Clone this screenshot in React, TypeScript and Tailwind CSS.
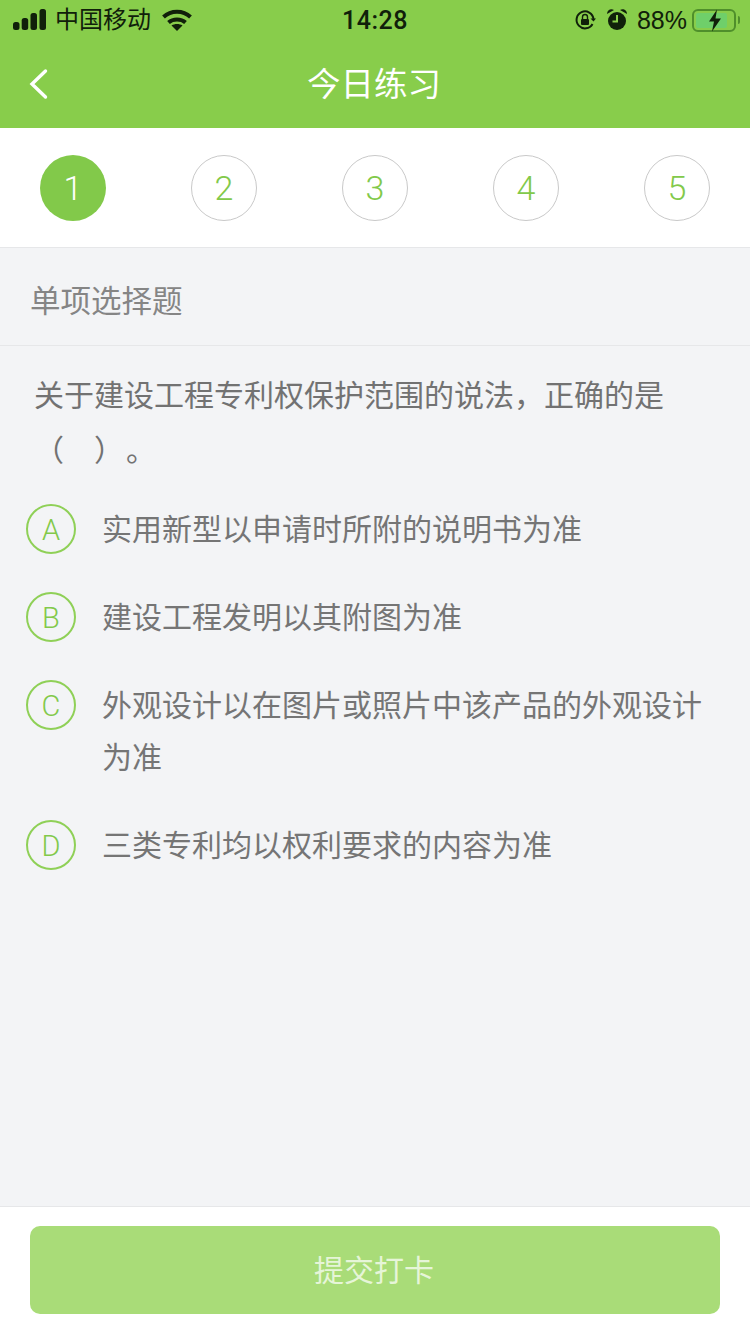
const cjk = "font-['Liberation_Sans','Noto_Sans_CJK_SC',sans-serif]";

const steps = [1, 2, 3, 4, 5];

const options = [
  { key: "A", text: "实用新型以申请时所附的说明书为准" },
  { key: "B", text: "建设工程发明以其附图为准" },
  { key: "C", text: "外观设计以在图片或照片中该产品的外观设计为准" },
  { key: "D", text: "三类专利均以权利要求的内容为准" },
];

function StatusBar() {
  return (
    <div className="flex h-10 items-center justify-between pl-[13px] pr-[10px] text-[#10200a]">
      <div className="flex items-center">
        <svg width="34" height="22" viewBox="0 0 34 22" fill="currentColor">
          <rect x="0" y="13" width="6.5" height="8" rx="2.5" />
          <rect x="8.7" y="9" width="6.5" height="12" rx="2.5" />
          <rect x="17.5" y="4" width="6.5" height="17" rx="2.5" />
          <rect x="26.5" y="0" width="6.5" height="21" rx="2.5" />
        </svg>
        <span className="ml-[8px] text-[24px] leading-none">中国移动</span>
        <svg className="ml-[11px]" width="30" height="22" viewBox="0 0 30 22" fill="none" stroke="currentColor" strokeWidth="4">
          <path d="M1.5 8 C9 1 21 1 28.5 8" />
          <path d="M6.5 13.5 C11 9.5 19 9.5 23.5 13.5" />
          <path d="M15 22 L9.5 16.5 C12.5 14.5 17.5 14.5 20.5 16.5 Z" fill="currentColor" stroke="none" />
        </svg>
      </div>
      <span className="absolute left-0 right-0 text-center font-['Roboto',sans-serif] text-[25px] font-medium leading-none tracking-[0.5px]">14:28</span>
      <div className="flex items-center">
        <svg width="22" height="22" viewBox="0 0 22 22" fill="none" stroke="currentColor" strokeWidth="2">
          <path d="M18.5 15 A8.5 8.5 0 1 1 19.5 10" />
          <path d="M16.5 9.5 L19.5 12.5 L22 9.5" fill="currentColor" stroke="none" />
          <rect x="7" y="10" width="8" height="6" rx="1" fill="currentColor" stroke="none" />
          <path d="M8.5 10 V8 A2.5 2.5 0 0 1 13.5 8 V10" strokeWidth="1.4" />
        </svg>
        <svg className="ml-[10px]" width="22" height="24" viewBox="0 0 22 24">
          <circle cx="11" cy="13" r="9" fill="currentColor" />
          <path d="M1 6 C1 2 5 0 8 2 Z" fill="currentColor" />
          <path d="M21 6 C21 2 17 0 14 2 Z" fill="currentColor" />
          <path d="M11 7 V13.5 H6.5" fill="none" stroke="#88cd4b" strokeWidth="2" />
        </svg>
        <span className="ml-[9px] text-[25px] leading-none">88%</span>
        <div className="relative ml-[5px] h-[23px] w-[44px] rounded-[6px] border-2 border-[#4f8f2b] p-[2px]">
          <div className="h-full w-[85%] rounded-[2px] bg-[#6fcf6a]" />
          <svg className="absolute left-[13px] top-[-2px]" width="16" height="23" viewBox="0 0 16 22" fill="currentColor">
            <path d="M10 0 L2 12 H7 L5 22 L14 9 H8.5 Z" />
          </svg>
        </div>
        <div className="ml-[2px] h-[8px] w-[2px] rounded-r bg-[#4f8f2b]" />
      </div>
    </div>
  );
}

export default function App() {
  return (
    <div className={`flex h-[1334px] w-[750px] flex-col bg-[#f3f4f6] ${cjk}`}>
      <header className="relative h-32 bg-[#88cd4b]">
        <StatusBar />
        <div className="relative flex h-[88px] items-center justify-center pt-[2px]">
          <svg className="absolute left-[29px] top-[28px]" width="20" height="32" viewBox="0 0 20 32" fill="none" stroke="#fff" strokeWidth="3.4" strokeLinecap="round">
            <path d="M16.5 3 L3 16 L16.5 29" />
          </svg>
          <span className="pr-[2px] text-[33.5px] leading-none text-white">今日练习</span>
        </div>
      </header>

      <div className="flex h-[120px] items-center justify-between border-b border-[#e6e7e9] bg-white px-10 pt-[1px] font-['Roboto',sans-serif] font-light">
        {steps.map((n) =>
          n === 1 ? (
            <div key={n} className="flex size-[66px] items-center justify-center rounded-full bg-[#82c94a] text-[34px] text-white">
              {n}
            </div>
          ) : (
            <div key={n} className="flex size-[66px] items-center justify-center rounded-full border border-[#c9c9c9] text-[34px] text-[#82c94a]">
              {n}
            </div>
          ),
        )}
      </div>

      <div className="flex h-[98px] items-center border-b border-[#e6e7e9] pl-[30px] pt-[10px] text-[30.5px] text-[#858585]">
        单项选择题
      </div>

      <div className="flex-1">
        <div className="mt-[22px] px-[34px] text-[30px] leading-[55px] text-[#727272]">
          <p>关于建设工程专利权保护范围的说法，正确的是</p>
          <p className="flex">
            <span>（　）</span>
            <span className="ml-[2px]">。</span>
          </p>
        </div>
        <ul className="mt-[26px] flex flex-col gap-9 pl-[26px] pr-[40px]">
          {options.map((o) => (
            <li key={o.key} className="flex items-start gap-[27px]">
              <div className="flex size-[50px] shrink-0 items-center justify-center rounded-full border-2 border-[#8fd057] pt-[3px] font-['Roboto',sans-serif] text-[29px] font-light leading-none text-[#82c94a]">
                {o.key}
              </div>
              <span className="ml-[-1px] text-[30px] leading-[52px] text-[#757575]">{o.text}</span>
            </li>
          ))}
        </ul>
      </div>

      <footer className="flex h-32 items-start border-t border-[#e6e7e9] bg-white px-[30px] pt-[19px]">
        <button className="flex h-[88px] w-full items-center justify-center rounded-[10px] bg-[#a9dc78] pr-[2px] text-[30px] text-[#e6f5d8]">
          提交打卡
        </button>
      </footer>
    </div>
  );
}
